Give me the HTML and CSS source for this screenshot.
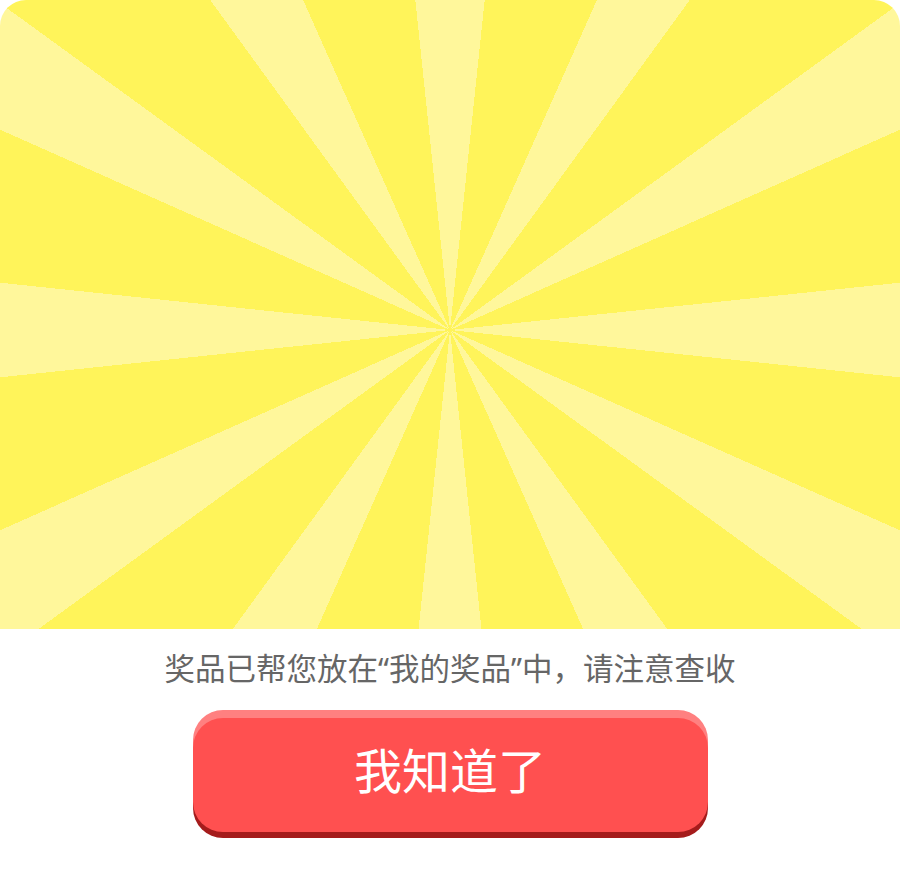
FILE: index.html
```html
<!DOCTYPE html>
<html lang="zh-CN">
<head>
<meta charset="utf-8">
<title>奖品</title>
<link rel="stylesheet" href="styles.css">
</head>
<body>
<div class="card">
  <div class="burst"></div>
  <div class="bottom">
    <p class="notice">奖品已帮您放在“我的奖品”中，请注意查收</p>
    <button class="ok-btn" type="button">我知道了</button>
  </div>
</div>
</body>
</html>
```
FILE: styles.css
```css
html, body {
  margin: 0;
  padding: 0;
  background: #ffffff;
}
.card {
  width: 900px;
  height: 870px;
  border-radius: 26px;
  overflow: hidden;
  background: #ffffff;
  display: flex;
  flex-direction: column;
  font-family: "Noto Sans CJK SC", "Noto Sans", sans-serif;
}
.burst {
  height: 629px;
  flex: none;
  background: repeating-conic-gradient(from -6deg at 450px 330px, #fff79b 0deg 12deg, #fff45a 12deg 30deg);
}
.bottom {
  display: flex;
  flex-direction: column;
  align-items: center;
}
.notice {
  margin: 18px 0 0;
  font-family: "Noto Sans", "Noto Sans CJK SC", sans-serif;
  font-size: 30.5px;
  line-height: 42px;
  color: #666666;
}
.ok-btn {
  margin-top: 29px;
  width: 515px;
  height: 114px;
  border: none;
  border-radius: 30px;
  background: #ff5050;
  box-shadow: 0 -8px 0 #ff8080, 0 6px 0 #a51c1c;
  color: #ffffff;
  font-family: "Noto Sans CJK SC", "Noto Sans", sans-serif;
  font-size: 48px;
  line-height: 1;
  padding: 0 0 14px;
  cursor: pointer;
}
```
